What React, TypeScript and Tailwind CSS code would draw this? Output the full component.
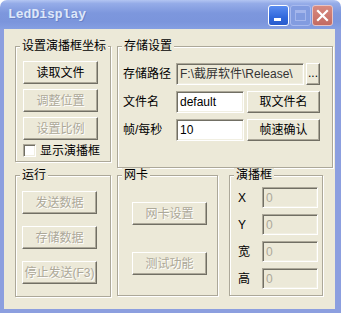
import React from "react";

const btnBase =
  "h-[23px] flex items-center justify-center bg-[#ece9d8] border border-t-white border-l-white border-b-[#716f64] border-r-[#716f64] shadow-[inset_-1px_-1px_0_#aca899] text-[12px] leading-none";
const sunken =
  "border border-t-[#aca899] border-l-[#aca899] border-b-white border-r-white shadow-[inset_1px_1px_0_#716f64,inset_-1px_-1px_0_#f1efe2]";
const disabledText = "text-[#aca899] [text-shadow:1px_1px_0_#fff]";

function Btn({ label, disabled, className }: { label: string; disabled?: boolean; className: string }) {
  return (
    <div className={`${btnBase} ${className} ${disabled ? disabledText : "text-black"}`}>{label}</div>
  );
}

function Group({ title, className, children }: { title: string; className: string; children: React.ReactNode }) {
  return (
    <fieldset className={`border border-[#aca899] shadow-[inset_1px_1px_0_#fff,1px_1px_0_#fff] ${className}`}>
      <legend className="ml-[4px] px-[2px] h-[14px] leading-[14px] text-[12px] bg-[#ece9d8] text-black">{title}</legend>
      {children}
    </fieldset>
  );
}

function TitleBar() {
  return (
    <div className="h-[29px] flex items-center bg-[linear-gradient(180deg,#b3c5f2_0%,#95ace8_12%,#7d97dd_45%,#7b95dc_75%,#859fe2_100%)]">
      <div className="pl-[8px] pt-[1px] font-['Liberation_Mono',monospace] font-bold text-[13px] text-[#dde7f9] [text-shadow:1px_1px_0_#6a82c8] tracking-[0px]">
        LedDisplay
      </div>
      <div className="ml-auto mr-[8px] flex gap-[1px] pt-[1px]">
        <div className="w-[21px] h-[21px] rounded-[3px] border border-white bg-[linear-gradient(180deg,#5a8cf0,#3168dc_60%,#2a5ccc)] relative">
          <div className="absolute left-[5px] top-[12px] w-[7px] h-[3px] bg-white" />
        </div>
        <div className="w-[21px] h-[21px] rounded-[3px] border border-[#a8baee] bg-[#829ce0] relative">
          <div className="absolute left-[4px] top-[4px] w-[11px] h-[11px] border border-[#a4b6ec] border-t-[3px]" />
        </div>
        <div className="w-[21px] h-[21px] rounded-[3px] border border-[#e7c4c4] bg-[linear-gradient(180deg,#d88a80,#c36b62)] relative">
          <svg className="absolute left-[3px] top-[3px]" width="13" height="13" viewBox="0 0 13 13">
            <path d="M2 2 L11 11 M11 2 L2 11" stroke="white" strokeWidth="2.2" strokeLinecap="square" />
          </svg>
        </div>
      </div>
    </div>
  );
}

export default function App() {
  return (
    <div className="w-[341px] h-[313px] bg-white font-['Liberation_Sans','Noto_Sans_CJK_SC',sans-serif]">
      <div className="w-[341px] h-[313px] flex flex-col rounded-t-[7px] overflow-hidden">
        <TitleBar />
        <div className="flex-1 flex flex-col bg-[#ece9d8] border-l-[4px] border-r-[6px] border-b-[4px] border-[#8c9fdf]">
          {/* row 1 */}
          <div className="flex items-start gap-[6px] pl-[11px] pt-[10px]">
            <Group title="设置演播框坐标" className="w-[96px] h-[123px]">
              <div className="pl-[7px] pt-[8px] flex flex-col gap-[5px]">
                <Btn label="读取文件" className="w-[75px]" />
                <Btn label="调整位置" disabled className="w-[75px]" />
                <Btn label="设置比例" disabled className="w-[75px]" />
                <div className="flex items-center h-[13px] mt-[-1px]">
                  <div className={`w-[13px] h-[13px] bg-white ${sunken}`} />
                  <span className="ml-[4px] text-[12px] leading-none text-black">显示演播框</span>
                </div>
              </div>
            </Group>
            <Group title="存储设置" className="w-[216px] h-[129px]">
              <div className="pl-[5px] pt-[10px] flex flex-col gap-[6px] text-[12px]">
                <div className="flex items-center h-[22px]">
                  <span className="w-[53px] leading-none text-black">存储路径</span>
                  <div className={`w-[128px] h-[22px] bg-[#ece9d8] ${sunken} flex items-center pl-[3px] text-[#333] leading-none whitespace-nowrap overflow-hidden`}>
                    F:\截屏软件\Release\
                  </div>
                  <div className={`${btnBase} ml-[2px] w-[14px] !h-[22px] !items-end pb-[5px] text-black`}>...</div>
                </div>
                <div className="flex items-center h-[22px]">
                  <span className="w-[53px] leading-none text-black">文件名</span>
                  <div className={`w-[68px] h-[22px] bg-white ${sunken} flex items-center pl-[3px] text-black leading-none`}>default</div>
                  <Btn label="取文件名" className="ml-[3px] w-[73px] !h-[22px]" />
                </div>
                <div className="flex items-center h-[22px]">
                  <span className="w-[53px] leading-none text-black">帧/每秒</span>
                  <div className={`w-[68px] h-[22px] bg-white ${sunken} flex items-center pl-[3px] text-black leading-none`}>10</div>
                  <Btn label="帧速确认" className="ml-[3px] w-[73px] !h-[22px]" />
                </div>
              </div>
            </Group>
          </div>
          {/* row 2 */}
          <div className="flex items-start pl-[11px]">
            <Group title="运行" className="w-[96px] h-[129px]">
              <div className="pl-[6px] pt-[9px] flex flex-col gap-[12px]">
                <Btn label="发送数据" disabled className="w-[75px]" />
                <Btn label="存储数据" disabled className="w-[75px]" />
                <Btn label="停止发送(F3)" disabled className="w-[75px]" />
              </div>
            </Group>
            <Group title="网卡" className="ml-[6px] w-[101px] h-[128px]">
              <div className="pl-[14px] pt-[20px] flex flex-col gap-[27px]">
                <Btn label="网卡设置" disabled className="w-[75px]" />
                <Btn label="测试功能" disabled className="w-[75px]" />
              </div>
            </Group>
            <Group title="演播框" className="ml-[11px] w-[94px] h-[128px]">
              <div className="pl-[8px] pt-[5px] flex flex-col gap-[6px] text-[12px]">
                {["X", "Y", "宽", "高"].map((l) => (
                  <div key={l} className="flex items-center h-[21px]">
                    <span className="w-[24px] leading-none text-black">{l}</span>
                    <div className={`w-[56px] h-[21px] bg-[#ece9d8] ${sunken} flex items-center pl-[3px] leading-none text-[#aca899]`}>0</div>
                  </div>
                ))}
              </div>
            </Group>
          </div>
        </div>
      </div>
    </div>
  );
}
